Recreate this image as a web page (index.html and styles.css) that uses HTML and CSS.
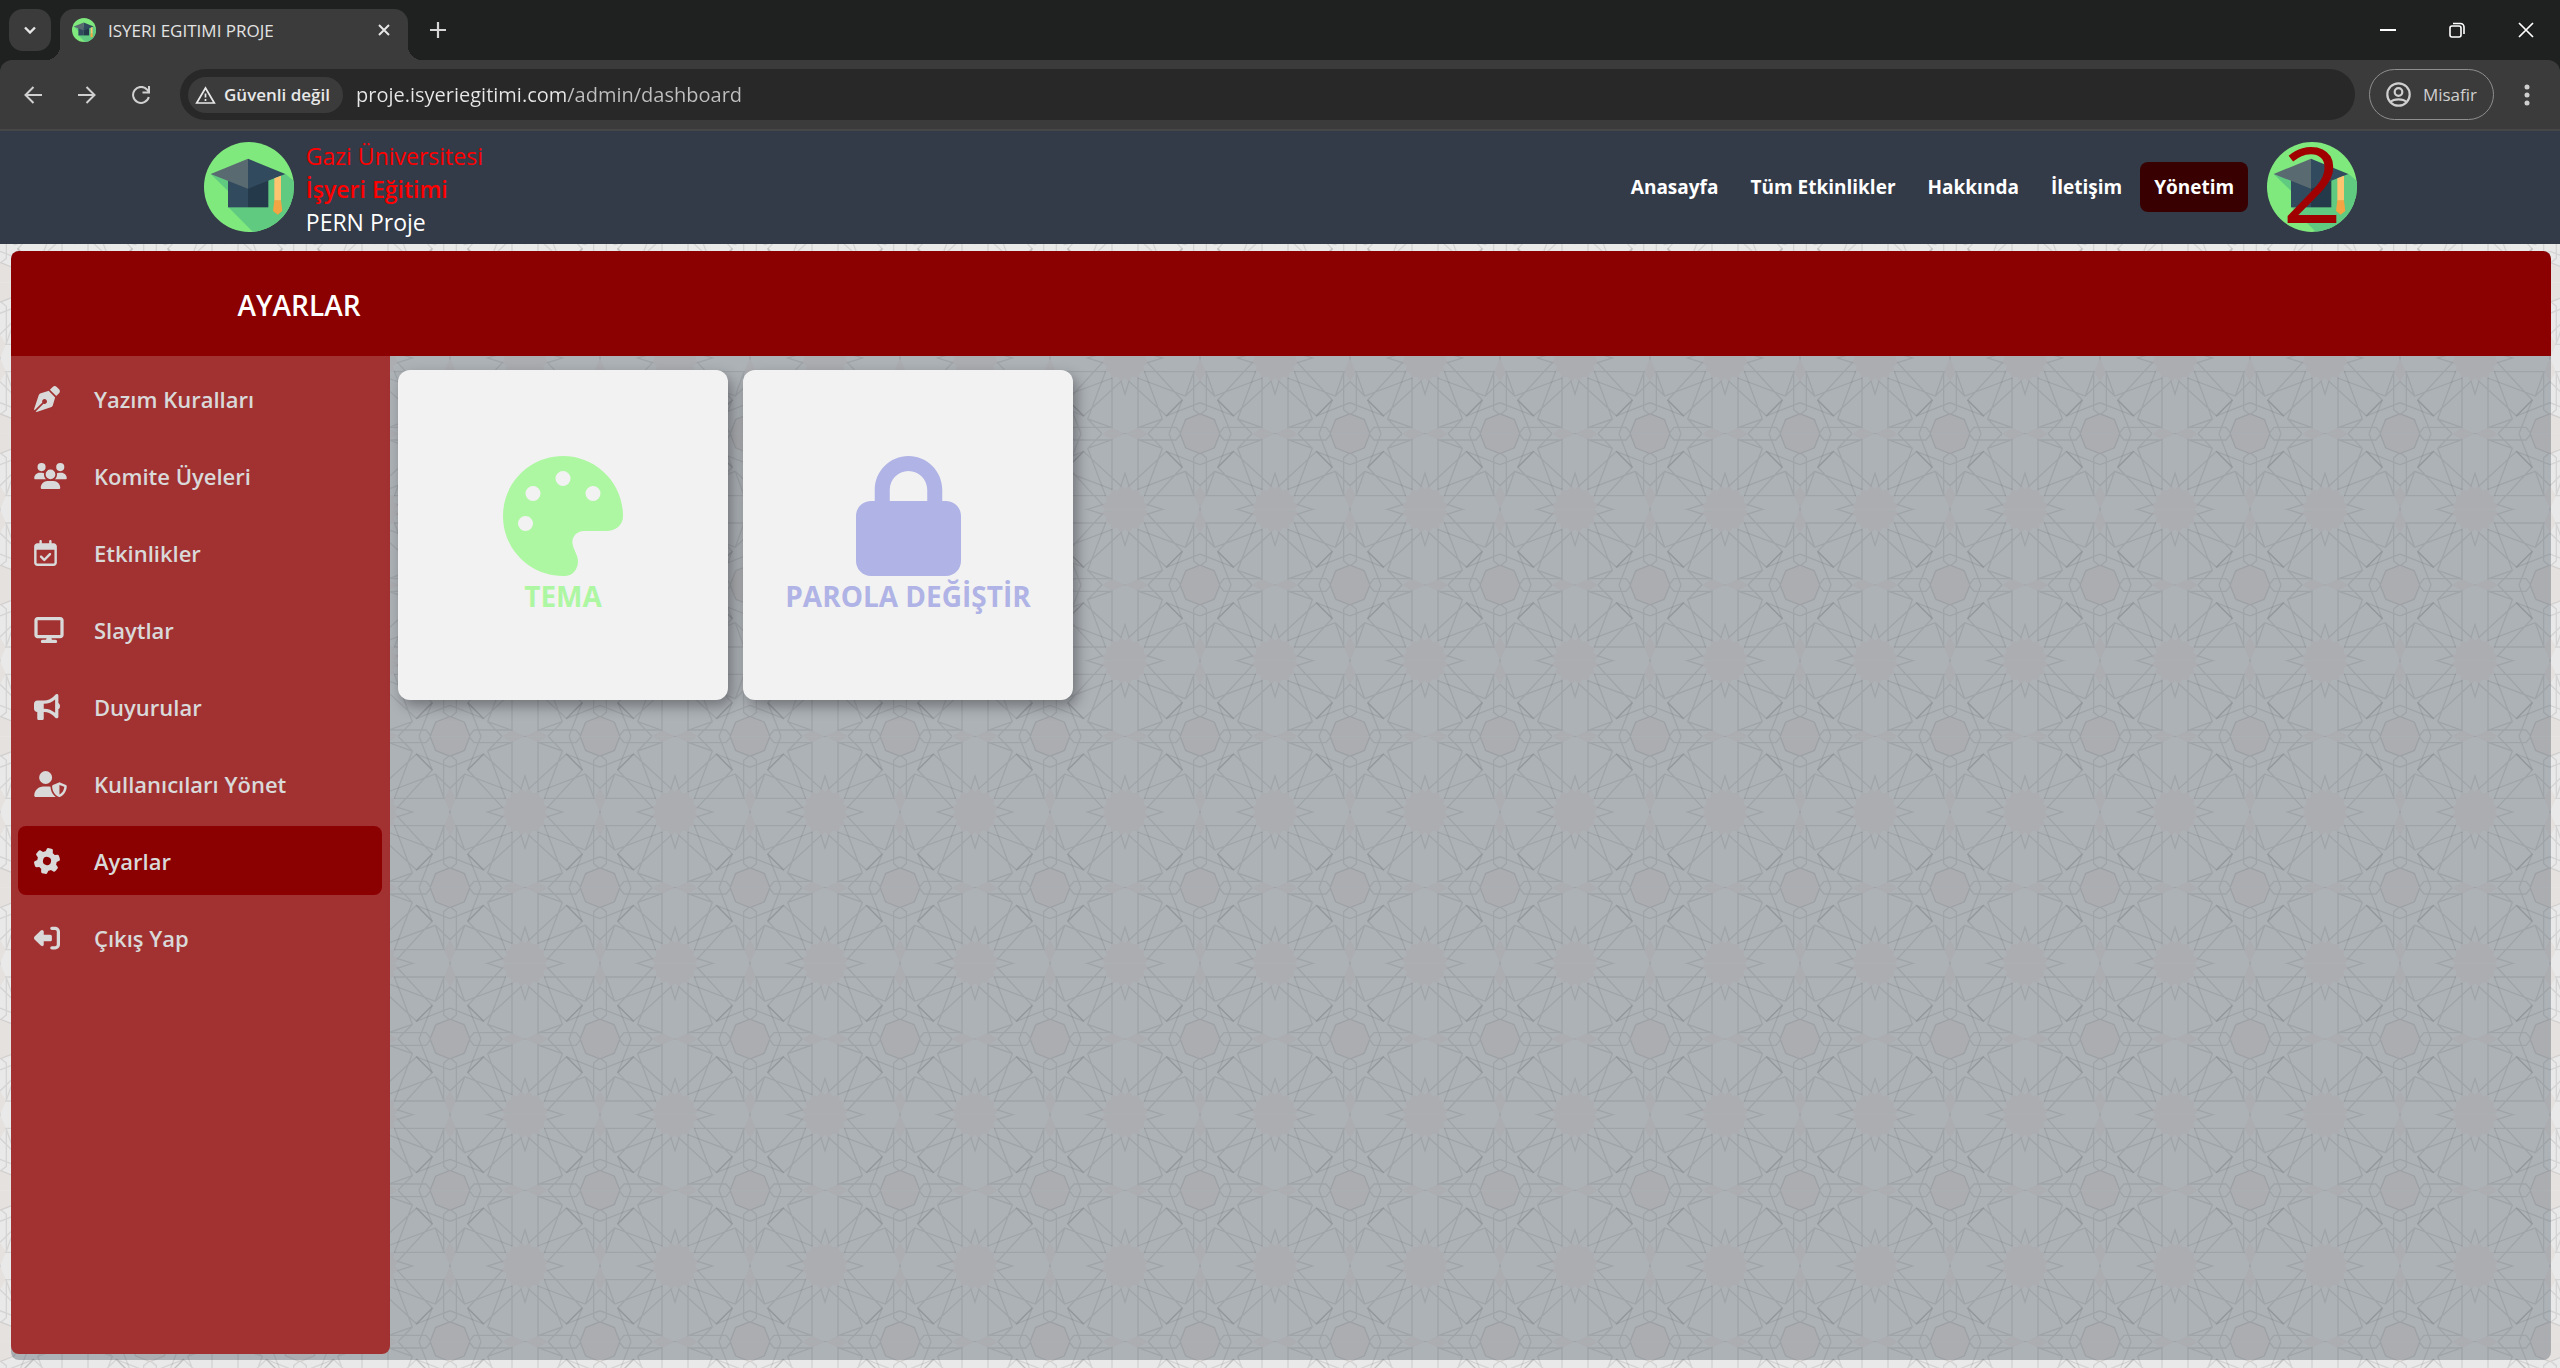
FILE: index.html
```html
<!DOCTYPE html>
<html lang="tr">
<head>
<meta charset="utf-8">
<meta name="viewport" content="width=device-width, initial-scale=1">
<title>ISYERI EGITIMI PROJE</title>
<link rel="stylesheet" href="styles.css">
</head>
<body>
<svg class="defs" aria-hidden="true">
  <defs>
    <clipPath id="disc"><circle cx="177" cy="171" r="135"/></clipPath>
    <symbol id="logo" viewBox="42 36 270 270">
      <g clip-path="url(#disc)">
        <rect x="42" y="36" width="270" height="270" fill="#80e97e"/>
        <path fill="#5fca80" d="M62 132L115 184V232L200 317H330V168L287 132Z"/>
      </g>
      <path fill="#324a5e" d="M114 145H174V232H114Z"/>
      <path fill="#243a4a" d="M174 145H235V232H174Z"/>
      <path fill="#5a6a71" d="M62 132L174 86V176Z"/>
      <path fill="#324a5e" d="M286 132L174 86V176Z"/>
      <path fill="#ffc470" d="M253 145L273 137V212H253Z"/>
      <path fill="#f2a542" d="M253 211H273L277 243L263 254L249 243Z"/>
    </symbol>
  </defs>
</svg>

<div class="tabstrip">
  <button class="tab-search" aria-label="Sekmelerde ara"><svg viewBox="0 0 12 8" width="12" height="8"><path d="M1 1.500L6 6.500L11 1.500" fill="none" stroke="#e6e6e6" stroke-width="2.400"/></svg></button>
  <div class="tab">
    <svg class="favicon"><use href="#logo"/></svg>
    <span class="tab-title">ISYERI EGITIMI PROJE</span>
    <button class="plain" aria-label="Sekmeyi kapat"><svg viewBox="0 0 12 12" width="12" height="12"><path d="M1 1L11 11M11 1L1 11" stroke="#e6e6e6" stroke-width="2"/></svg></button>
  </div>
  <button class="plain new-tab" aria-label="Yeni sekme"><svg viewBox="0 0 16 16" width="16" height="16"><path d="M8 0V16M0 8H16" stroke="#d6d6d6" stroke-width="2.200"/></svg></button>
  <div class="window-buttons">
    <button class="plain" aria-label="Küçült"><svg viewBox="0 0 16 16" width="16" height="16"><path d="M0 8H16" stroke="#fff" stroke-width="2"/></svg></button>
    <button class="plain" aria-label="Önceki boyut"><svg viewBox="0 0 16 16" width="16" height="16" fill="none" stroke="#fff" stroke-width="1.600"><rect x="1" y="4" width="11" height="11" rx="2"/><path d="M4 1.500H11.500A3.500 3.500 0 0 1 15 5V12"/></svg></button>
    <button class="plain" aria-label="Kapat"><svg viewBox="0 0 16 16" width="16" height="16"><path d="M1 1L15 15M15 1L1 15" stroke="#fff" stroke-width="1.700"/></svg></button>
  </div>
</div>

<div class="toolbar">
  <button class="plain" aria-label="Geri"><svg viewBox="0 0 18 18" width="18" height="18" fill="none" stroke="#d0d0d0" stroke-width="2"><path d="M18 9H2M9.500 1L1.500 9L9.500 17"/></svg></button>
  <button class="plain" aria-label="İleri"><svg viewBox="0 0 18 18" width="18" height="18" fill="none" stroke="#d0d0d0" stroke-width="2"><path d="M0 9H16M8.500 1L16.500 9L8.500 17"/></svg></button>
  <button class="plain" aria-label="Yenile"><svg viewBox="0 0 18 18" width="18" height="18" fill="none" stroke="#d0d0d0" stroke-width="2"><path d="M16.800 11A8 8 0 1 1 15 3.500L17 5.500M17 0V6.500H10.500"/></svg></button>
  <div class="omnibox">
    <button class="chip"><svg viewBox="0 0 21 18" width="21" height="18"><path d="M10.500 2L19.300 17H1.700Z" fill="none" stroke="#e8e8e8" stroke-width="1.700"/><path d="M10.500 7.500V11.500M10.500 13V15" stroke="#e8e8e8" stroke-width="1.700"/></svg>Güvenli değil</button>
    <input class="url" type="text" aria-label="Adres" value="proje.isyeriegitimi.com/admin/dashboard">
  </div>
  <button class="profile"><svg viewBox="0 0 25 25" width="25" height="25" fill="none" stroke="#cfcfcf" stroke-width="2.200"><circle cx="12.500" cy="12.500" r="11.200"/><circle cx="12.500" cy="10" r="3.800"/><path d="M4.500 20C8 16.500 17 16.500 20.500 20"/></svg>Misafir</button>
  <button class="plain menu" aria-label="Menü"><svg viewBox="0 0 6 22" width="6" height="22" fill="#cfcfcf"><circle cx="3" cy="3" r="2.500"/><circle cx="3" cy="11" r="2.500"/><circle cx="3" cy="19" r="2.500"/></svg></button>
</div>

<div class="page">
  <header class="site-header">
    <a class="brand" href="#">
      <svg class="logo"><use href="#logo"/></svg>
      <span class="brand-text"><span class="red">Gazi Üniversitesi</span><strong class="red">İşyeri Eğitimi</strong><span>PERN Proje</span></span>
    </a>
    <nav class="site-nav">
      <a href="#">Anasayfa</a>
      <a href="#">Tüm Etkinlikler</a>
      <a href="#">Hakkında</a>
      <a href="#">İletişim</a>
      <a href="#" class="current">Yönetim</a>
      <a href="#" class="avatar"><svg class="logo"><use href="#logo"/></svg><span class="count">2</span></a>
    </nav>
  </header>

  <main class="panel">
    <div class="panel-head"><h1>AYARLAR</h1></div>
    <div class="panel-body">
      <nav class="sidebar">
        <a href="#"><span class="icon"><svg viewBox="0 0 512 512" width="26" height="26"><path d="M368.400 18.300L312.700 74.100 437.900 199.300l55.700-55.700c21.900-21.900 21.900-57.300 0-79.200L447.600 18.300c-21.900-21.900-57.300-21.900-79.200 0zM288 94.600l-9.200 2.800L134.700 140.600c-19.900 6-35.700 21.200-42.300 41L3.800 445.800c-3.800 11.300-1 23.900 7.300 32.400L164.700 324.700c-3-6.300-4.700-13.300-4.700-20.700c0-26.500 21.500-48 48-48s48 21.500 48 48s-21.500 48-48 48c-7.400 0-14.400-1.700-20.700-4.700L33.700 500.900c8.600 8.300 21.100 11.200 32.400 7.300l264.300-88.600c19.700-6.600 35-22.400 41-42.300l43.200-144.100 2.800-9.200L288 94.600z"/></svg></span>Yazım Kuralları</a>
        <a href="#"><span class="icon"><svg viewBox="0 0 640 512" width="33" height="26"><path d="M144 0a80 80 0 1 1 0 160A80 80 0 1 1 144 0zM512 0a80 80 0 1 1 0 160A80 80 0 1 1 512 0zM0 298.700C0 239.800 47.800 192 106.700 192h42.700c15.900 0 31 3.500 44.600 9.700c-1.300 7.200-1.900 14.700-1.900 22.300c0 38.200 16.800 72.500 43.300 96H21.300C9.600 320 0 310.400 0 298.700zM405.300 320h-.7c26.600-23.500 43.300-57.800 43.300-96c0-7.600-.7-15-1.900-22.300c13.600-6.300 28.700-9.700 44.600-9.700h42.700C592.200 192 640 239.800 640 298.700c0 11.800-9.600 21.300-21.300 21.300H405.300zM224 224a96 96 0 1 1 192 0 96 96 0 1 1 -192 0zM128 485.300C128 411.700 187.700 352 261.300 352H378.700C452.300 352 512 411.700 512 485.300c0 14.700-11.900 26.700-26.700 26.700H154.700c-14.700 0-26.700-11.900-26.700-26.700z"/></svg></span>Komite Üyeleri</a>
        <a href="#"><span class="icon"><svg viewBox="0 0 448 512" width="23" height="26"><path d="M128 0c13.300 0 24 10.700 24 24V64H296V24c0-13.300 10.700-24 24-24s24 10.700 24 24V64h40c35.300 0 64 28.700 64 64V448c0 35.300-28.700 64-64 64H64c-35.300 0-64-28.700-64-64V128C0 92.700 28.700 64 64 64h40V24c0-13.300 10.700-24 24-24zM400 192H48V448c0 8.800 7.200 16 16 16H384c8.800 0 16-7.200 16-16V192zM329 297L217 409c-9.400 9.400-24.600 9.400-33.900 0l-64-64c-9.400-9.400-9.400-24.600 0-33.900s24.600-9.400 33.900 0l47 47 95-95c9.400-9.400 24.600-9.400 33.900 0s9.400 24.600 0 33.900z"/></svg></span>Etkinlikler</a>
        <a href="#"><span class="icon"><svg viewBox="0 0 576 512" width="30" height="26"><path d="M64 0C28.700 0 0 28.700 0 64V352c0 35.300 28.700 64 64 64H240l-10.700 32H160c-17.700 0-32 14.300-32 32s14.300 32 32 32H416c17.700 0 32-14.300 32-32s-14.300-32-32-32H346.700L336 416H512c35.300 0 64-28.700 64-64V64c0-35.300-28.700-64-64-64H64zM512 64V352H64V64H512z"/></svg></span>Slaytlar</a>
        <a href="#"><span class="icon"><svg viewBox="0 0 512 512" width="26" height="26"><path d="M480 32c0-12.900-7.800-24.600-19.800-29.600s-25.700-2.200-34.900 6.900L381.700 53c-48 48-113.100 75-181 75H64c-35.300 0-64 28.700-64 64v96c0 35.300 28.700 64 64 64l0 128c0 17.700 14.300 32 32 32h64c17.700 0 32-14.300 32-32V352l8.700 0c67.900 0 133 27 181 75l43.600 43.600c9.200 9.200 22.900 11.900 34.900 6.900s19.800-16.600 19.800-29.600V300.400c18.600-8.800 32-32.500 32-60.400s-13.400-51.600-32-60.400V32zm-64 76.700V240 371.300C357.200 317.800 280.500 288 200.700 288H192V192h8.700c79.800 0 156.500-29.800 215.300-83.300z"/></svg></span>Duyurular</a>
        <a href="#"><span class="icon"><svg viewBox="0 0 640 512" width="33" height="26"><path d="M224 256A128 128 0 1 0 224 0a128 128 0 1 0 0 256zm-45.700 48C79.800 304 0 383.800 0 482.300C0 498.700 13.300 512 29.700 512H418.300c1.800 0 3.500-.2 5.300-.5c-76.300-55.100-99.800-141-103.100-200.200c-16.100-4.800-33.100-7.300-50.700-7.300H178.300zm308.800-78.300l-120 48C358 277.400 352 286.200 352 296c0 63.300 25.900 168.800 134.800 214.200c5.900 2.500 12.600 2.500 18.500 0C614.100 464.800 640 359.300 640 296c0-9.800-6-18.600-15.100-22.300l-120-48c-5.700-2.300-12.100-2.300-17.800 0zM591.400 312c-3.900 50.700-27.200 116.700-95.400 149.700V273.800L591.400 312z"/></svg></span>Kullanıcıları Yönet</a>
        <a href="#" class="current"><span class="icon"><svg viewBox="0 0 512 512" width="26" height="26"><path transform="rotate(14 256 256)" d="M495.900 166.600c3.200 8.700 .5 18.400-6.400 24.600l-43.300 39.400c1.100 8.300 1.700 16.800 1.700 25.400s-.6 17.100-1.700 25.400l43.300 39.400c6.900 6.200 9.600 15.900 6.400 24.600c-4.400 11.900-9.700 23.300-15.800 34.300l-4.700 8.100c-6.600 11-14 21.400-22.100 31.200c-5.900 7.200-15.700 9.600-24.500 6.800l-55.700-17.700c-13.400 10.300-28.200 18.900-44 25.400l-12.500 57.100c-2 9.100-9 16.300-18.200 17.800c-13.800 2.300-28 3.500-42.500 3.500s-28.700-1.200-42.500-3.500c-9.200-1.500-16.200-8.700-18.200-17.800l-12.500-57.100c-15.800-6.500-30.600-15.100-44-25.400L83.100 425.900c-8.800 2.800-18.600 .3-24.500-6.800c-8.100-9.800-15.500-20.200-22.100-31.200l-4.700-8.100c-6.100-11-11.400-22.400-15.800-34.300c-3.200-8.700-.5-18.400 6.400-24.600l43.300-39.400C64.600 273.100 64 264.600 64 256s.6-17.100 1.700-25.400L22.400 191.200c-6.900-6.200-9.600-15.900-6.400-24.600c4.400-11.900 9.700-23.300 15.800-34.300l4.700-8.100c6.600-11 14-21.400 22.100-31.200c5.900-7.200 15.700-9.600 24.500-6.800l55.700 17.700c13.400-10.300 28.200-18.900 44-25.400l12.500-57.100c2-9.100 9-16.300 18.200-17.800C227.300 1.200 241.500 0 256 0s28.700 1.200 42.500 3.500c9.200 1.500 16.200 8.700 18.200 17.800l12.500 57.100c15.800 6.500 30.600 15.100 44 25.400l55.700-17.700c8.800-2.800 18.600-.3 24.500 6.800c8.100 9.800 15.500 20.200 22.100 31.200l4.700 8.100c6.100 11 11.400 22.400 15.800 34.300zM256 336a80 80 0 1 0 0-160 80 80 0 1 0 0 160z"/></svg></span>Ayarlar</a>
        <a href="#"><span class="icon"><svg viewBox="0 0 512 512" width="26" height="26"><path transform="translate(512 0) scale(-1 1)" d="M377.900 105.900L500.700 228.700c7.200 7.200 11.300 17.100 11.300 27.300s-4.100 20.100-11.300 27.300L377.900 406.100c-6.400 6.400-15 9.900-24 9.900c-18.700 0-33.900-15.200-33.900-33.900l0-62.100-128 0c-17.700 0-32-14.300-32-32l0-64c0-17.700 14.300-32 32-32l128 0 0-62.100c0-18.700 15.200-33.900 33.900-33.900c9 0 17.600 3.600 24 9.900zM160 96L96 96c-17.700 0-32 14.300-32 32l0 256c0 17.700 14.300 32 32 32l64 0c17.700 0 32 14.300 32 32s-14.300 32-32 32l-64 0c-53 0-96-43-96-96L0 128C0 75 43 32 96 32l64 0c17.700 0 32 14.300 32 32s-14.300 32-32 32z"/></svg></span>Çıkış Yap</a>
      </nav>
      <section class="cards">
        <a href="#" class="card theme">
          <svg viewBox="0 0 512 512" width="120" height="120"><path d="M512 256c0 .9 0 1.800 0 2.700c-.4 36.500-33.600 61.300-70.100 61.300L344 320c-26.500 0-48 21.500-48 48c0 3.400 .4 6.700 1 9.900c2.100 10.200 6.500 20 10.800 29.900c6.100 13.800 12.100 27.500 12.100 42c0 31.800-21.600 60.700-53.400 62c-3.500 .1-7 .2-10.600 .2C114.600 512 0 397.400 0 256S114.600 0 256 0S512 114.600 512 256zM128 288a32 32 0 1 0 -64 0 32 32 0 1 0 64 0zm0-96a32 32 0 1 0 0-64 32 32 0 1 0 0 64zM288 96a32 32 0 1 0 -64 0 32 32 0 1 0 64 0zm96 96a32 32 0 1 0 0-64 32 32 0 1 0 0 64z"/></svg>
          <span>TEMA</span>
        </a>
        <a href="#" class="card password">
          <svg viewBox="0 0 448 512" width="105" height="120"><path d="M144 144v48H304V144c0-44.200-35.800-80-80-80s-80 35.800-80 80zM80 192V144C80 64.500 144.500 0 224 0s144 64.500 144 144v48h16c35.300 0 64 28.700 64 64V448c0 35.300-28.700 64-64 64H64c-35.300 0-64-28.700-64-64V256c0-35.300 28.700-64 64-64H80z"/></svg>
          <span>PAROLA DEĞİŞTİR</span>
        </a>
      </section>
    </div>
  </main>
</div>
</body>
</html>
```
FILE: styles.css
```css
* { box-sizing: border-box; }

body {
  margin: 0;
  min-height: 100vh;
  display: flex;
  flex-direction: column;
  background: #1f2120;
  color: #fff;
  font-family: "Open Sans", "Noto Sans", sans-serif;
}

a { color: inherit; text-decoration: none; }
button, input { font: inherit; color: inherit; }
svg { display: block; flex: none; }
.defs { position: absolute; width: 0; height: 0; }

/* browser frame */
.plain {
  display: grid;
  place-items: center;
  width: 32px;
  height: 32px;
  padding: 0;
  border: 0;
  background: none;
}

.tabstrip {
  display: flex;
  align-items: center;
  height: 60px;
  padding-left: 9px;
}

.tab-search {
  display: grid;
  place-items: center;
  width: 42px;
  height: 42px;
  padding: 0;
  border: 0;
  border-radius: 14px;
  background: #3b3b3b;
}

.tab {
  position: relative;
  align-self: flex-end;
  display: flex;
  align-items: center;
  gap: 12px;
  width: 348px;
  height: 51px;
  margin-left: 9px;
  padding: 0 8px 9px 12px;
  border-radius: 14px 14px 0 0;
  background: #3b3b3b;
}

.tab::before,
.tab::after {
  content: "";
  position: absolute;
  bottom: 0;
  width: 14px;
  height: 14px;
}
.tab::before { right: 100%; background: radial-gradient(circle at 0 0, transparent 14px, #3b3b3b 14px); }
.tab::after { left: 100%; background: radial-gradient(circle at 100% 0, transparent 14px, #3b3b3b 14px); }

.favicon { width: 24px; height: 24px; }
.tab-title { flex: 1; font-size: 17px; color: #e3e3e3; }
.new-tab { margin-left: 14px; }

.window-buttons {
  display: flex;
  gap: 37px;
  margin-left: auto;
  padding-right: 18px;
}

.toolbar {
  display: flex;
  align-items: center;
  height: 71px;
  padding: 0 17px;
  border-bottom: 2px solid #474747;
  border-radius: 12px 12px 0 0;
  background: #3b3b3b;
}
.toolbar > .plain + .plain { margin-left: 22px; }

.omnibox {
  flex: 1;
  display: flex;
  align-items: center;
  gap: 13px;
  height: 51px;
  margin-left: 23px;
  padding: 0 26px 0 8px;
  border-radius: 26px;
  background: #282828;
}

.chip {
  display: flex;
  align-items: center;
  gap: 8px;
  height: 36px;
  padding: 0 13px 0 7px;
  border: 0;
  border-radius: 18px;
  background: #3b3b3b;
  color: #e8e8e8;
  font-size: 17px;
  font-weight: 600;
  white-space: nowrap;
}

.url {
  flex: 1;
  min-width: 0;
  padding: 0;
  border: 0;
  outline: 0;
  font-size: 20px;
  color: transparent;
  background: linear-gradient(to right, #e8e8e8 210px, #c0c0c0 210px);
  -webkit-background-clip: text;
  background-clip: text;
}

.profile {
  display: flex;
  align-items: center;
  gap: 12px;
  height: 51px;
  margin-left: 14px;
  padding: 0 16px;
  border: 1px solid #8f8f8f;
  border-radius: 26px;
  background: none;
  color: #cfcfcf;
  font-size: 17px;
}
.menu { margin-left: 17px; }

/* site */
.page {
  flex: 1;
  display: flex;
  flex-direction: column;
  background-color: #e9e9e9;
  background-size: 150px 454px;
  background-image: url("data:image/svg+xml,%3Csvg xmlns='http://www.w3.org/2000/svg' viewBox='0 0 450 1362'%3E%3Cdefs%3E%3Cg id='q'%3E%3Cpath fill='%23e5e1df' d='M0 0H60L43 43L0 60ZM225 227V167L213 155L202 171L184 167L181 183L166 187L170 204L154 213L165 227ZM156 0L186 18L225 0ZM0 156L18 186L0 227Z'/%3E%3Cg fill='none' stroke='%23000' stroke-opacity='.09' stroke-width='4'%3E%3Cpath id='h' d='M60 0L43 43M93 0L53 102M53 102L100 53L213 157L258 14L225 0L192 -14M156 0L113 44L167 187M113 44L186 18V168M60 4L72 19H186'/%3E%3Cuse href='%23h' transform='matrix(0 1 1 0 0 0)'/%3E%3C/g%3E%3C/g%3E%3CclipPath id='c'%3E%3Cpath d='M0 0H225V227H0Z'/%3E%3C/clipPath%3E%3Cg id='k' clip-path='url(%23c)'%3E%3Cuse href='%23q'/%3E%3C/g%3E%3Cg id='t'%3E%3Cuse href='%23k'/%3E%3Cuse href='%23k' transform='matrix(-1 0 0 1 450 0)'/%3E%3Cuse href='%23k' transform='matrix(1 0 0 -1 0 454)'/%3E%3Cuse href='%23k' transform='matrix(-1 0 0 -1 450 454)'/%3E%3C/g%3E%3C/defs%3E%3Cuse href='%23t'/%3E%3Cuse href='%23t' y='454'/%3E%3Cuse href='%23t' y='908'/%3E%3C/svg%3E");
}

.site-header {
  display: flex;
  align-items: center;
  justify-content: space-between;
  height: 113px;
  padding: 0 calc(8% - 2px) 2px calc(8% - 1px);
  background: #333a48;
}

.brand { display: flex; align-items: center; gap: 12px; }
.logo { width: 90px; height: 90px; }
.brand-text {
  display: flex;
  flex-direction: column;
  padding-top: 6px;
  font-size: 23px;
  line-height: 33px;
}
.brand-text strong { font-weight: 600; }
.red { color: #f00; }

.site-nav {
  display: flex;
  align-items: center;
  gap: 4px;
  font-size: 19px;
  font-weight: 700;
}
.site-nav a { padding: 12px 14px; line-height: 26px; }
.site-nav .current { border-radius: 8px; background: #380000; }
.site-nav .avatar { position: relative; margin-left: 15px; padding: 0; }
.count {
  position: absolute;
  inset: 0;
  color: #a00000;
  font-size: 104px;
  font-weight: 500;
  line-height: 82px;
  text-align: center;
}

.panel {
  flex: 1;
  display: flex;
  flex-direction: column;
  margin: 7px 9px 8px 11px;
  border-radius: 8px;
  background: rgba(38, 54, 70, .3);
}

.panel-head {
  height: 105px;
  border-radius: 8px 8px 0 0;
  background: #8b0000;
}
.panel-head h1 {
  width: 576px;
  margin: 0;
  font-size: 28px;
  font-weight: 600;
  line-height: 108px;
  text-align: center;
}

.panel-body { flex: 1; display: flex; }

.sidebar {
  display: flex;
  flex-direction: column;
  gap: 8px;
  width: 379px;
  margin-bottom: 6px;
  padding: 8px 8px 0 7px;
  border-radius: 0 0 8px 8px;
  background: #a23232;
  color: #d9d9d9;
  font-size: 22px;
  font-weight: 600;
}
.sidebar a {
  display: flex;
  align-items: center;
  height: 69px;
  padding-left: 16px;
  border-radius: 8px;
}
.sidebar .current { background: #8b0000; }
.icon { width: 60px; }
.sidebar svg, .card svg { fill: currentColor; }

.cards {
  flex: 1;
  display: flex;
  flex-wrap: wrap;
  align-content: flex-start;
  gap: 15px;
  padding: 14px 8px;
}
.card {
  display: flex;
  flex-direction: column;
  align-items: center;
  justify-content: center;
  width: 330px;
  height: 330px;
  padding-top: 2px;
  border-radius: 12px;
  background: #f2f2f2;
  box-shadow: 4px 6px 14px rgba(0, 0, 0, .35);
  font-size: 28px;
  font-weight: 700;
  line-height: 40px;
}
.theme { color: #aef7a2; }
.password { color: #b0b3e5; }
```
